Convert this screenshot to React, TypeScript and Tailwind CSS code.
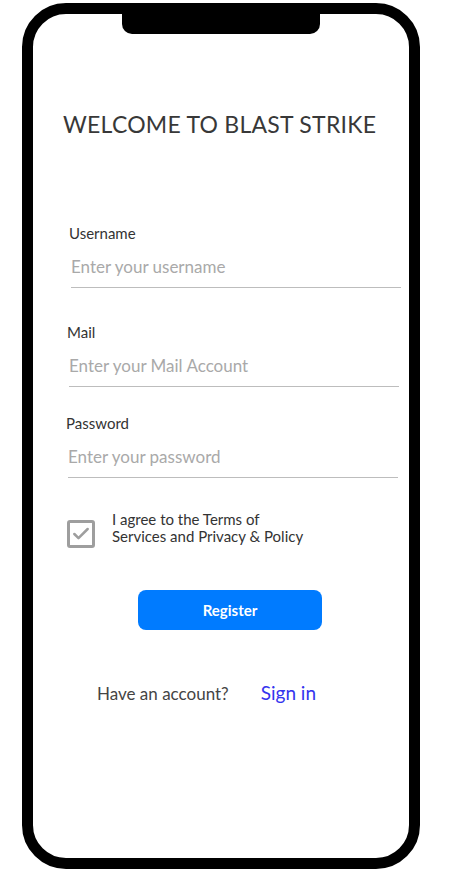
import { Check } from "lucide-react";

const font = { fontFamily: "Lato, 'Open Sans', sans-serif" };

function Field({
  label,
  placeholder,
  shift,
}: {
  label: string;
  placeholder: string;
  shift: string;
}) {
  return (
    <div className={shift}>
      <div className="text-[15px] leading-[18px] text-[#333]">{label}</div>
      <div className="ml-[2px] mt-[15px] border-b border-[#bdbdbd] pb-[10px] pr-[10px]">
        <div className="text-[17px] leading-[20px] text-[#a9a9a9]">{placeholder}</div>
      </div>
    </div>
  );
}

export default function App() {
  return (
    <div className="w-full h-[880px] bg-white pt-[3px] pl-[22px]" style={font}>
      <div className="relative w-[398px] h-[866px] rounded-[44px] border-[11px] border-black bg-white">
        {/* notch */}
        <div className="absolute left-[89px] top-0 w-[198px] h-[20px] bg-black rounded-b-[10px]" />

        <div className="flex flex-col pt-[95px]">
          <h1 className="ml-[30px] text-[23px] leading-[30px] tracking-[0.25px] text-[#383838]">
            WELCOME TO BLAST STRIKE
          </h1>

          <div className="mt-[85px] flex flex-col">
            <Field label="Username" placeholder="Enter your username" shift="ml-[36px] mr-[8px]" />
            <Field label="Mail" placeholder="Enter your Mail Account" shift="ml-[34px] mr-[10px] mt-[35px]" />
            <Field label="Password" placeholder="Enter your password" shift="ml-[33px] mr-[11px] mt-[27px]" />
          </div>

          <div className="ml-[34px] mt-[33px] flex items-start gap-[17px]">
            <div className="mt-[9px] w-[28px] h-[28px] rounded-[3px] border-[3px] border-[#9e9e9e] flex items-center justify-center">
              <Check className="w-[20px] h-[20px] text-[#9e9e9e]" strokeWidth={3} />
            </div>
            <div className="text-[15px] leading-[17px] text-[#333]">
              I agree to the Terms of
              <br />
              Services and Privacy &amp; Policy
            </div>
          </div>

          <button className="self-start ml-[105px] mt-[42px] w-[184px] h-[40px] rounded-[8px] bg-[#007bff] text-white text-[15px] font-bold">
            Register
          </button>

          <div className="mt-[52px] ml-[64px] flex items-center h-[24px]">
            <span className="text-[17px] leading-[24px] text-[#444]">Have an account?</span>
            <span className="ml-[32px] text-[19px] leading-[24px] text-[#3434ee] -mt-[3px]">Sign in</span>
          </div>
        </div>
      </div>
    </div>
  );
}
